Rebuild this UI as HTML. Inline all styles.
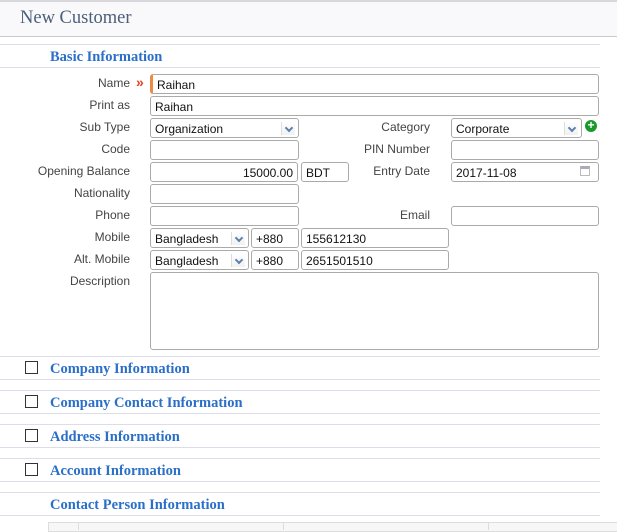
<!DOCTYPE html>
<html><head><meta charset="utf-8"><style>
*{box-sizing:border-box;margin:0;padding:0}
body{width:617px;height:530px;overflow:hidden;background:#fff;font-family:"Liberation Sans",sans-serif;font-size:12px;color:#333;position:relative}
.a{position:absolute}
.hdr{left:0;top:0;width:617px;height:37px;background:#f9f9fb;border-top:2px solid #d8d8dc;border-bottom:1px solid #c8c8d0}
.title{left:20px;top:8px;font-family:"Liberation Serif","DejaVu Serif",serif;font-size:18.5px;color:#4a5f7a}
.hl{height:1px;background:#dcdcea;left:0;width:600px}
.sec{font-family:"Liberation Serif","DejaVu Serif",serif;font-size:14.5px;font-weight:bold;color:#2a6fc9;left:50px}
.lb{width:130px;left:0;text-align:right;font-size:12px;color:#444}
.lb2{width:430px;left:0;text-align:right;font-size:12px;color:#444}
.in{border:1px solid #aaa;border-radius:3px;height:20px;background:#fff;font-size:12px;padding:3px 0 0 4px;color:#111;font-family:"Liberation Sans",sans-serif}
.sel::after{content:"";position:absolute;right:3px;top:3px;width:13px;height:13px;border-left:1px solid #ddd;background:linear-gradient(#fff,#f2f2f2)}
.sel::before{content:"";position:absolute;right:6px;top:6px;width:4px;height:4px;border-right:2px solid #5a80b0;border-bottom:2px solid #5a80b0;transform:rotate(45deg);z-index:1}
.cb{width:13px;height:13px;border:1px solid #333;left:25px}
</style></head><body>
<div class="a hdr"></div>
<div class="a title">New Customer</div>
<div class="a hl" style="top:44px"></div>
<div class="a sec" style="top:49px">Basic Information</div>
<div class="a hl" style="top:67px"></div>

<div class="a lb" style="top:76px">Name</div>
<div class="a" style="left:136px;top:74px;color:#e04020;font-size:14px;font-weight:bold">»</div>
<div class="a in" style="left:150px;top:74px;width:449px;border-left:3px solid #f08a40">Raihan</div>
<div class="a lb" style="top:98px">Print as</div>
<div class="a in" style="left:150px;top:96px;width:449px">Raihan</div>
<div class="a lb" style="top:120px">Sub Type</div>
<div class="a in sel" style="left:150px;top:118px;width:149px">Organization</div>
<div class="a lb2" style="top:120px">Category</div>
<div class="a in sel" style="left:451px;top:118px;width:131px">Corporate</div>
<div class="a" style="left:585px;top:120px;width:12px;height:12px;border-radius:50%;background:#1a9a2a;color:#fff;font-size:12px;line-height:11px;text-align:center;font-weight:bold">+</div>
<div class="a lb" style="top:142px">Code</div>
<div class="a in" style="left:150px;top:140px;width:149px"></div>
<div class="a lb2" style="top:142px">PIN Number</div>
<div class="a in" style="left:451px;top:140px;width:148px"></div>
<div class="a lb" style="top:164px">Opening Balance</div>
<div class="a in" style="left:150px;top:162px;width:148px;text-align:right;padding-right:4px">15000.00</div>
<div class="a in" style="left:301px;top:162px;width:48px">BDT</div>
<div class="a lb2" style="top:164px">Entry Date</div>
<div class="a in" style="left:451px;top:162px;width:148px">2017-11-08</div>
<div class="a" style="left:580px;top:166px;width:10px;height:10px;border:1px solid #bbb;border-top:3px solid #aab"></div>
<div class="a lb" style="top:186px">Nationality</div>
<div class="a in" style="left:150px;top:184px;width:149px"></div>
<div class="a lb" style="top:208px">Phone</div>
<div class="a in" style="left:150px;top:206px;width:149px"></div>
<div class="a lb2" style="top:208px">Email</div>
<div class="a in" style="left:451px;top:206px;width:148px"></div>
<div class="a lb" style="top:230px">Mobile</div>
<div class="a in sel" style="left:150px;top:228px;width:99px">Bangladesh</div>
<div class="a in" style="left:251px;top:228px;width:48px">+880</div>
<div class="a in" style="left:301px;top:228px;width:148px">155612130</div>
<div class="a lb" style="top:252px">Alt. Mobile</div>
<div class="a in sel" style="left:150px;top:250px;width:99px">Bangladesh</div>
<div class="a in" style="left:251px;top:250px;width:48px">+880</div>
<div class="a in" style="left:301px;top:250px;width:148px">2651501510</div>
<div class="a lb" style="top:274px">Description</div>
<div class="a in" style="left:150px;top:272px;width:449px;height:78px"></div>

<div class="a hl" style="top:356px"></div>
<div class="a cb" style="top:361px"></div>
<div class="a sec" style="top:361px">Company Information</div>
<div class="a hl" style="top:379px"></div>
<div class="a hl" style="top:390px"></div>
<div class="a cb" style="top:395px"></div>
<div class="a sec" style="top:395px">Company Contact Information</div>
<div class="a hl" style="top:413px"></div>
<div class="a hl" style="top:424px"></div>
<div class="a cb" style="top:429px"></div>
<div class="a sec" style="top:429px">Address Information</div>
<div class="a hl" style="top:447px"></div>
<div class="a hl" style="top:458px"></div>
<div class="a cb" style="top:463px"></div>
<div class="a sec" style="top:463px">Account Information</div>
<div class="a hl" style="top:481px"></div>
<div class="a hl" style="top:492px"></div>
<div class="a sec" style="top:497px">Contact Person Information</div>
<div class="a hl" style="top:515px"></div>
<div class="a" style="left:48px;top:522px;width:569px;height:10px;background:#f7f7f7;border:1px solid #ddd;border-right:none"></div>
<div class="a" style="left:78px;top:522px;width:1px;height:8px;background:#ddd"></div>
<div class="a" style="left:283px;top:522px;width:1px;height:8px;background:#ddd"></div>
<div class="a" style="left:488px;top:522px;width:1px;height:8px;background:#ddd"></div>
</body></html>
